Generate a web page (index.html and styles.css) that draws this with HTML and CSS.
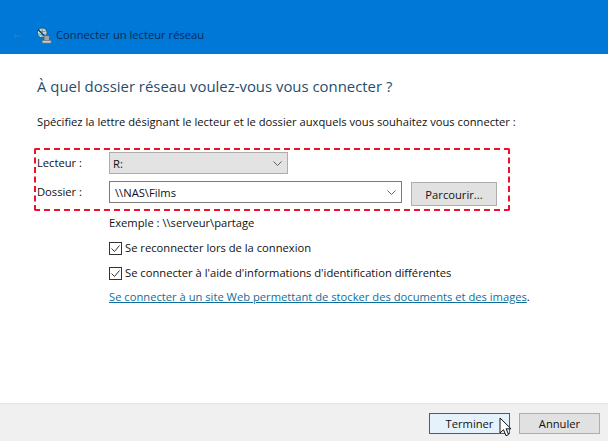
FILE: index.html
```html
<!DOCTYPE html>
<html lang="fr">
<head>
    <meta charset="UTF-8">
    <title>Connecter un lecteur réseau</title>
    <link rel="stylesheet" href="styles.css">
</head>
<body>
    <div class="window">
        <header class="titlebar">
            <svg class="back-arrow" width="14" height="10" viewBox="0 0 14 10">
                <path d="M11 5H4M6 3L4 5l2 2" fill="none" stroke="#2f7fbf" stroke-width="1"/>
            </svg>
            <svg class="net-icon" width="16" height="17" viewBox="0 0 18 18">
                <circle cx="7" cy="6" r="5.500" fill="#b9dbe8" stroke="#24506a"/>
                <path d="M3 3.500c2 1.500 5 1.500 8 .5M2 7c3 1.500 6 1.500 9.500 0M7 .8v10" fill="none" stroke="#3f7f9c" stroke-width="0.8"/>
                <path d="M2 2l12 12" stroke="#1d3c52" stroke-width="1.400"/>
                <rect x="9" y="9" width="6" height="6" fill="#9aa5ab" stroke="#4c5a63" stroke-width="0.8"/>
                <rect x="7" y="14.500" width="10" height="3" fill="#c6ced2" stroke="#66757d" stroke-width="0.8"/>
            </svg>
            <span class="title">Connecter un lecteur réseau</span>
        </header>

        <main class="content">
            <h1>À quel dossier réseau voulez-vous vous connecter ?</h1>
            <p class="intro">Spécifiez la lettre désignant le lecteur et le dossier auxquels vous souhaitez vous connecter :</p>

            <div class="highlight">
                <div class="row row-drive">
                    <span class="field-label">Lecteur :</span>
                    <div class="combo combo-drive">
                        <span>R:</span>
                        <svg class="chevron" width="9" height="5" viewBox="0 0 11 6"><path d="M.5 .5l5 5 5-5" fill="none" stroke="#444"/></svg>
                    </div>
                </div>
                <div class="row row-folder">
                    <span class="field-label">Dossier :</span>
                    <div class="combo combo-folder">
                        <span>\\NAS\Films</span>
                        <svg class="chevron" width="9" height="5" viewBox="0 0 11 6"><path d="M.5 .5l5 5 5-5" fill="none" stroke="#444"/></svg>
                    </div>
                    <button class="btn btn-browse" type="button">Parcourir...</button>
                </div>
            </div>

            <div class="options">
                <div class="example">Exemple : \\serveur\partage</div>
                <label class="check check-first">
                    <svg class="box" width="13" height="13" viewBox="0 0 13 13"><rect x=".5" y=".5" width="12" height="12" fill="#fff" stroke="#333"/><path d="M2.500 6.500l3 3 5-6" fill="none" stroke="#333"/></svg>
                    Se reconnecter lors de la connexion
                </label>
                <label class="check">
                    <svg class="box" width="13" height="13" viewBox="0 0 13 13"><rect x=".5" y=".5" width="12" height="12" fill="#fff" stroke="#333"/><path d="M2.500 6.500l3 3 5-6" fill="none" stroke="#333"/></svg>
                    Se connecter à l'aide d'informations d'identification différentes
                </label>
                <div class="link-line"><a href="#">Se connecter à un site Web permettant de stocker des documents et des images</a>.</div>
            </div>
        </main>

        <footer class="footer">
            <button class="btn btn-default" type="button">Terminer</button>
            <button class="btn" type="button">Annuler</button>
        </footer>

        <svg class="cursor" width="14" height="21" viewBox="0 0 14 21">
            <path d="M1 1v15l3.500-3.300 2.500 6 2.600-1.100-2.500-5.800H12z" fill="#fff" stroke="#111" stroke-width="1"/>
        </svg>
    </div>
</body>
</html>
```

FILE: styles.css
```css
html, body {
    margin: 0;
    padding: 0;
}

body {
    font-family: "Open Sans", "Noto Sans", sans-serif;
    font-size: 11.2px;
    color: #111;
    background: #fff;
}

.window {
    position: relative;
    width: 608px;
    height: 441px;
    display: flex;
    flex-direction: column;
    overflow: hidden;
}

.titlebar {
    height: 54px;
    flex-shrink: 0;
    box-sizing: border-box;
    padding: 27px 0 0 10px;
    background: #0078d7;
    display: flex;
    align-items: flex-start;
}

.back-arrow {
    margin-top: 4px;
}

.net-icon {
    margin-left: 12px;
}

.title {
    margin-left: 4px;
    line-height: 16px;
    color: #0b2a55;
}

.content {
    flex: 1;
    padding: 0 0 0 37px;
}

h1 {
    margin: 21px 0 0;
    font-size: 14.9px;
    font-weight: 400;
    line-height: 22px;
    color: #1f4e6e;
}

.intro {
    margin: 17px 0 0;
    line-height: 16px;
}

.highlight {
    width: 471px;
    height: 59px;
    margin: 18px 0 0 -3px;
    padding: 0 0 0 1px;
    border: 2px dashed #f0102c;
    border-radius: 2px;
}

.row {
    display: flex;
    align-items: flex-start;
}

.row-drive {
    margin-top: 2px;
}

.row-folder {
    margin-top: 7px;
}

.field-label {
    width: 72px;
    line-height: 22px;
}

.combo {
    height: 22px;
    box-sizing: border-box;
    display: flex;
    align-items: center;
    justify-content: space-between;
    border: 1px solid #7a7a7a;
}

.combo-drive {
    width: 179px;
    padding: 0 5px 0 3px;
    background: #e3e3e3;
    border-color: #adadad;
}

.combo-folder {
    width: 293px;
    padding: 0 5px 0 5px;
    background: #fff;
}

.btn {
    width: 81px;
    height: 21px;
    padding: 0;
    font: inherit;
    color: #111;
    background: #e1e1e1;
    border: 1px solid #adadad;
}

.btn-browse {
    width: 86px;
    height: 24px;
    margin: 1px 0 0 9px;
}

.options {
    padding-left: 72px;
}

.example {
    margin-top: 4px;
    line-height: 16px;
}

.check {
    display: flex;
    align-items: center;
    gap: 3px;
    line-height: 16px;
    margin-top: 9px;
}

.check-first {
    margin-top: 9px;
}

.link-line {
    margin-top: 8px;
    line-height: 16px;
}

.link-line a {
    color: #0f6f9a;
}

.footer {
    height: 38px;
    flex-shrink: 0;
    box-sizing: border-box;
    padding: 9px 8px 0 0;
    background: #f0f0f0;
    border-top: 1px solid #e6e6e6;
    display: flex;
    justify-content: flex-end;
    gap: 9px;
}

.btn-default {
    background: #e5f1fb;
    border-color: #1a6f94;
}

.cursor {
    position: absolute;
    left: 499px;
    top: 417px;
}
```
